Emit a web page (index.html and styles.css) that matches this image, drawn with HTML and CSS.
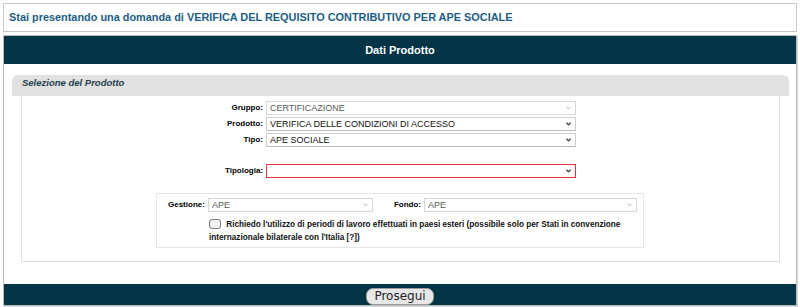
FILE: index.html
```html
<!DOCTYPE html>
<html lang="it">
<head>
    <meta charset="UTF-8">
    <meta name="viewport" content="width=device-width, initial-scale=1.0">
    <title>Dati Prodotto</title>
    <link rel="stylesheet" href="styles.css">
</head>
<body>
    <div class="intro">Stai presentando una domanda di VERIFICA DEL REQUISITO CONTRIBUTIVO PER APE SOCIALE</div>

    <div class="panel">
        <div class="panel-head">Dati Prodotto</div>

        <div class="section">
            <div class="section-title">Selezione del Prodotto</div>
            <div class="section-body">
                <div class="field">
                    <label>Gruppo:</label>
                    <div class="select disabled">
                        <select disabled><option>CERTIFICAZIONE</option></select>
                        <svg class="chev" viewBox="0 0 6 4"><path d="M0.5 0.5 L3 3 L5.5 0.5"/></svg>
                    </div>
                </div>
                <div class="field">
                    <label>Prodotto:</label>
                    <div class="select">
                        <select><option>VERIFICA DELLE CONDIZIONI DI ACCESSO</option></select>
                        <svg class="chev" viewBox="0 0 6 4"><path d="M0.5 0.5 L3 3 L5.5 0.5"/></svg>
                    </div>
                </div>
                <div class="field">
                    <label>Tipo:</label>
                    <div class="select">
                        <select><option>APE SOCIALE</option></select>
                        <svg class="chev" viewBox="0 0 6 4"><path d="M0.5 0.5 L3 3 L5.5 0.5"/></svg>
                    </div>
                </div>
                <div class="field field-gap">
                    <label>Tipologia:</label>
                    <div class="select required">
                        <select><option></option></select>
                        <svg class="chev" viewBox="0 0 6 4"><path d="M0.5 0.5 L3 3 L5.5 0.5"/></svg>
                    </div>
                </div>

                <div class="extra">
                    <div class="extra-row">
                        <label>Gestione:</label>
                        <div class="select disabled gestione">
                            <select disabled><option>APE</option></select>
                            <svg class="chev" viewBox="0 0 6 4"><path d="M0.5 0.5 L3 3 L5.5 0.5"/></svg>
                        </div>
                        <label class="fondo-label">Fondo:</label>
                        <div class="select disabled fondo">
                            <select disabled><option>APE</option></select>
                            <svg class="chev" viewBox="0 0 6 4"><path d="M0.5 0.5 L3 3 L5.5 0.5"/></svg>
                        </div>
                    </div>
                    <label class="check">
                        <input type="checkbox">
                        Richiedo l'utilizzo di periodi di lavoro effettuati in paesi esteri (possibile solo per Stati in convenzione internazionale bilaterale con l'Italia [?])
                    </label>
                </div>
            </div>
        </div>

        <div class="panel-foot">
            <button class="next-btn">Prosegui</button>
        </div>
    </div>
</body>
</html>
```

FILE: styles.css
```css
* {
    margin: 0;
    padding: 0;
    box-sizing: border-box;
}

body {
    font-family: 'Liberation Sans', Arial, sans-serif;
    background: #fff;
    padding: 3px;
    color: #111;
}

.intro {
    height: 29px;
    border: 1px solid #c8c8c8;
    padding-left: 5px;
    line-height: 27px;
    font-size: 10.9px;
    font-weight: bold;
    color: #1b5d85;
    margin-bottom: 3px;
}

.panel {
    border: 1px solid #bdbdbd;
    box-shadow: 1px 1px 0 #d6d6d6;
}

.panel-head {
    background: #023446;
    color: #fff;
    height: 28px;
    line-height: 28px;
    text-align: center;
    font-size: 11px;
    font-weight: bold;
}

.section {
    margin: 11px 7px 0 8px;
}

.section-title {
    background: #e1e1e1;
    height: 21px;
    line-height: 15px;
    padding-left: 10px;
    border-radius: 6px 6px 0 0;
    font-size: 9.5px;
    font-weight: bold;
    font-style: italic;
    color: #1f3b4d;
}

.section-body {
    margin: 0 9px;
    border: 1px solid #dedede;
    border-top: none;
    padding: 5px 0 13px;
}

.field {
    display: flex;
    align-items: center;
    margin-bottom: 2px;
    padding-left: 178px;
}

.field label {
    width: 63px;
    text-align: right;
    font-size: 8px;
    line-height: 14px;
    font-weight: bold;
    color: #000;
    margin-right: 3px;
}

.field-gap {
    margin-top: 17px;
}

.select {
    position: relative;
    width: 310px;
    height: 14px;
}

.select select {
    display: block;
    appearance: none;
    -webkit-appearance: none;
    width: 100%;
    height: 14px;
    border: 1px solid #cfcfcf;
    border-bottom-color: #bbb;
    background: #fff;
    font-family: 'Liberation Sans', Arial, sans-serif;
    font-size: 9px;
    line-height: 12px;
    color: #111;
    padding: 0 3px;
    border-radius: 0;
}

.select.disabled select {
    color: #5a5a5a;
    opacity: 1;
    border-color: #d6d6d6;
}

.select.required select {
    border-color: #e8343a;
}

.chev {
    position: absolute;
    right: 5px;
    top: 5px;
    width: 5px;
    height: 4px;
    fill: none;
    stroke: #222;
    stroke-width: 1.3;
}

.select.disabled .chev {
    stroke: #888;
    stroke-width: 0.8;
}

.extra {
    width: 488px;
    margin: 15px 0 0 134px;
    border: 1px solid #e6e6e6;
    padding: 4px 0 3px 11px;
}

.extra-row {
    display: flex;
    align-items: center;
}

.extra-row label {
    font-size: 8px;
    line-height: 14px;
    font-weight: bold;
    color: #000;
    margin-right: 3px;
}

.select.gestione {
    width: 165px;
}

.fondo-label {
    margin-left: 21px;
}

.select.fondo {
    width: 213px;
}

.check {
    display: block;
    margin: 6px 0 0 41px;
    width: 420px;
    font-size: 8.2px;
    font-weight: bold;
    line-height: 13px;
}

.check input {
    appearance: none;
    -webkit-appearance: none;
    width: 12px;
    height: 10px;
    border: 1px solid #7a7a7a;
    border-radius: 3px;
    background: #f1f1f1;
    vertical-align: -2px;
    margin-right: 3px;
}

.panel-foot {
    margin-top: 22px;
    background: #023446;
    height: 21px;
    text-align: center;
    padding-top: 2px;
}

.next-btn {
    font-family: 'DejaVu Sans', sans-serif;
    font-size: 12px;
    color: #222;
    background: #e8e8e8;
    border: 1px solid #9a9a9a;
    border-radius: 7px;
    height: 17px;
    padding: 0 7px;
    line-height: 14px;
}
```
